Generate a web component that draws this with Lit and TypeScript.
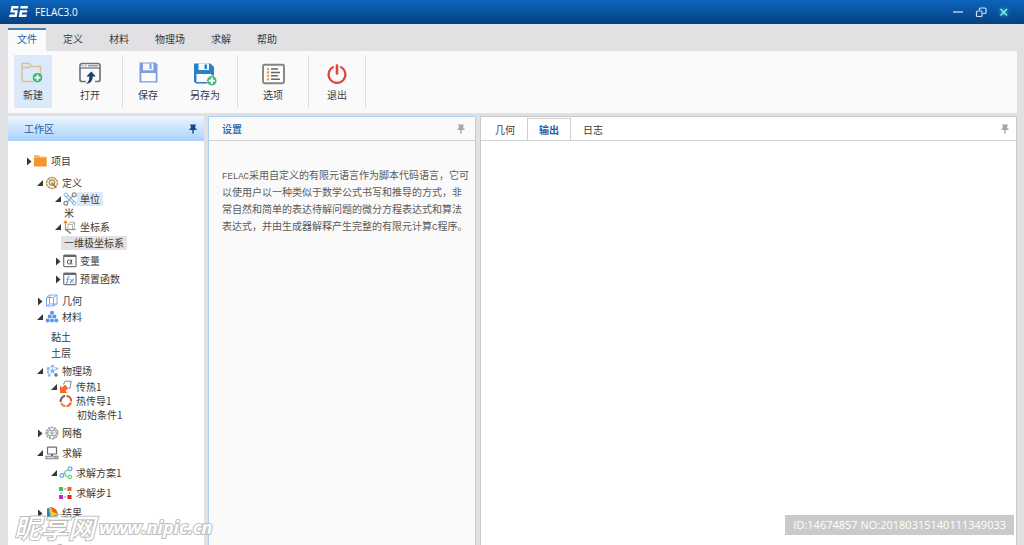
import { LitElement, html, svg, css, nothing } from "lit";
import { customElement, state } from "lit/decorators.js";
import { classMap } from "lit/directives/class-map.js";

type Row = {
  label: string;
  level: string;
  gap?: string;
  arrow?: "open" | "closed";
  icon?: string;
  mark?: "blue" | "gray";
};

const ROWS: Row[] = [
  { label: "项目", level: "l1", arrow: "closed", icon: "folder" },
  { label: "定义", level: "l2", gap: "g8", arrow: "open", icon: "define" },
  { label: "单位", level: "l4", gap: "g2", arrow: "open", icon: "unit", mark: "blue" },
  { label: "米", level: "t2" },
  { label: "坐标系", level: "l4", arrow: "open", icon: "axes" },
  { label: "一维极坐标系", level: "t2", gap: "g2", mark: "gray" },
  { label: "变量", level: "l4", gap: "g4", arrow: "closed", icon: "variable" },
  { label: "预置函数", level: "l4", gap: "g4", arrow: "closed", icon: "func" },
  { label: "几何", level: "l2", gap: "g8", arrow: "closed", icon: "cube" },
  { label: "材料", level: "l2", gap: "g2", arrow: "open", icon: "balls" },
  { label: "黏土", level: "t1", gap: "g6" },
  { label: "土层", level: "t1", gap: "g2" },
  { label: "物理场", level: "l2", gap: "g4", arrow: "open", icon: "atoms" },
  { label: "传热1", level: "l3", gap: "g2", arrow: "open", icon: "heat" },
  { label: "热传导1", level: "l3", icon: "ring" },
  { label: "初始条件1", level: "t3" },
  { label: "网格", level: "l2", gap: "g4", arrow: "closed", icon: "mesh" },
  { label: "求解", level: "l2", gap: "g6", arrow: "open", icon: "computer" },
  { label: "求解方案1", level: "l3", gap: "g6", arrow: "open", icon: "plan" },
  { label: "求解步1", level: "l3", gap: "g6", icon: "steps" },
  { label: "结果", level: "l2", gap: "g6", arrow: "closed", icon: "result" },
];

const TREE_ICONS: Record<string, unknown> = {
  folder: svg`<path d="M0 1.500h5l1 1.200h6.700v9.800H0z" fill="#f7942a"/><path d="M0 1.500h5l1 1.600h6.700v1H0z" fill="#f9b673"/>`,
  define: svg`<circle cx="7" cy="7" r="5.400" fill="none" stroke="#b8935a" stroke-width="1.500" stroke-dasharray="2.800 0.500"/><circle cx="7" cy="6.600" r="2.700" fill="none" stroke="#b8935a" stroke-width="1.500"/><path d="M6.500 6.500l4.600 5" stroke="#a07a42" stroke-width="1.800"/>`,
  unit: svg`<g fill="none"><path d="M3.500 3.500l7.500 7.500" stroke="#7fb2f2" stroke-width="3.400"/><path d="M3.500 3.500l7.500 7.500" stroke="#fff" stroke-width="1.400"/><circle cx="2.800" cy="2.800" r="1.800" stroke="#7fb2f2"/><circle cx="11.200" cy="11.200" r="1.800" stroke="#7fb2f2"/><path d="M10 4L4 10" stroke="#7fb2f2" stroke-width="1.400"/><circle cx="11.200" cy="2.800" r="1.900" stroke="#888" stroke-width="1.300"/><circle cx="2.800" cy="11.200" r="1.900" stroke="#888" stroke-width="1.300"/></g>`,
  axes: svg`<g fill="none"><path d="M2.500 10V1M0.800 3l1.700-2L4.200 3" stroke="#f08a24" stroke-width="1.300"/><path d="M2 9.500h10.500" stroke="#888" stroke-width="1.300"/><path d="M2.500 9.500l5.500 4" stroke="#777" stroke-width="1.300"/><path d="M5 4.500h4.500v5H5zM5 4.500l2-2.300h4.500v5l-2 2.300M9.500 4.500l2-2.300" stroke="#a5a5a5" stroke-width="0.800"/></g>`,
  variable: svg`<rect x="0.700" y="1" width="12.300" height="11.700" rx="1" fill="#fff" stroke="#777" stroke-width="1.200"/><path d="M1 2h12" stroke="#666" stroke-width="2"/><ellipse cx="6.200" cy="8" rx="1.900" ry="2.100" fill="none" stroke="#555"/><path d="M8.800 5.500l-.7 4q.1 1 1.300.5" fill="none" stroke="#555"/>`,
  func: svg`<rect x="0.700" y="1" width="12.300" height="11.700" rx="1" fill="#fff" stroke="#777" stroke-width="1.200"/><path d="M1 2h12" stroke="#666" stroke-width="2"/><path d="M6.800 4.600q-1.600-.5-1.900 1.400l-.8 4.500q-.3 1-1.200.8M3.400 7.200h2.800M7.300 7l3.200 4M10.800 7l-4 4" fill="none" stroke="#5b9df0" stroke-width="1.100"/>`,
  cube: svg`<g fill="none" stroke="#74acf2" stroke-width="1"><path d="M1.500 3.500h7v8.500h-7zM4.500 1h7.500v9H4.500zM1.500 3.500l3-2.500M8.500 3.500L12 1M8.500 12L12 10M1.500 12l3-2"/></g>`,
  balls: svg`<g fill="#5897ea"><circle cx="7" cy="2.800" r="2"/><circle cx="4.700" cy="6.600" r="2"/><circle cx="9.300" cy="6.600" r="2"/><circle cx="2.700" cy="10.600" r="2"/><circle cx="7" cy="10.600" r="2"/><circle cx="11.300" cy="10.600" r="2"/></g>`,
  atoms: svg`<g stroke="#8fbdf2" stroke-width="0.900" fill="#6fa9f2"><path d="M7.500 7V2M7.500 7l4.500-2M7.500 7l3 4M7.500 7l-3 4.500M7.500 7L3 4.500M3 4.500l4.500-2.500 4.500 2.600M3 4.500v4l1 3" fill="none"/><circle cx="7.500" cy="7" r="1.500"/><circle cx="7.500" cy="2" r=".9"/><circle cx="12" cy="4.600" r=".9"/><circle cx="3" cy="4.500" r="1"/><circle cx="4.200" cy="11.500" r=".9"/><circle cx="3" cy="8" r=".8"/></g><path d="M11 9v4M9 11h4" stroke="#555" stroke-width="1.200"/>`,
  heat: svg`<path d="M4.500 4.500l1.500-3.300h6.200l-1 7H9" fill="none" stroke="#888" stroke-width="1"/><path d="M1 13V5.500l2 2L6 4.800l3.200 3.300L6.600 11l2 2z" fill="#f5682c"/>`,
  ring: svg`<g fill="none" stroke-width="2.100"><path d="M1.800 8A5.200 5.200 0 0 1 6 1.900" stroke="#666"/><path d="M7.500 1.900A5.200 5.200 0 0 1 12.200 7.500" stroke="#ea5a2c"/><path d="M12 8.500A5.200 5.200 0 0 1 7.500 12.200" stroke="#f26a2e"/><path d="M6.500 12.200A5.200 5.200 0 0 1 2.100 9" stroke="#f58a45"/></g>`,
  mesh: svg`<circle cx="7" cy="7" r="5.800" fill="none" stroke="#a0a0a0" stroke-width="1.400" stroke-dasharray="2.400 .8"/><path d="M2 4.500h10M1 7h12M2 9.500h10M4.500 2l5 10M9.500 2l-5 10M1.500 6l4 6M12.500 6l-4 6M1.500 8l4-6M12.500 8l-4-6" stroke="#a0a0a0" stroke-width=".8"/>`,
  computer: svg`<rect x="2.500" y="1.200" width="9" height="6.800" rx=".6" fill="#fff" stroke="#6e6e6e" stroke-width="1.200"/><path d="M7 8v2" stroke="#666" stroke-width="2"/><rect x="1" y="10.200" width="12" height="2.600" fill="#ddd" stroke="#777" stroke-width=".9"/><path d="M9.500 11.500h2" stroke="#3cbf6b"/>`,
  plan: svg`<g fill="none" stroke-width="1.200"><circle cx="2.800" cy="9.500" r="1.900" stroke="#6aa7f2"/><circle cx="11" cy="2.800" r="1.900" stroke="#6aa7f2"/><circle cx="11" cy="11" r="1.700" stroke="#62d486"/><path d="M4.500 8.500L6.500 5l3-1M6 7q.5 4.200 3.300 4" stroke="#62d486"/></g>`,
  steps: svg`<rect x="0" y="1" width="4" height="4" fill="#3cc55c"/><rect x="8.500" y="1" width="4" height="4" fill="#f0622a"/><rect x="0" y="9" width="4" height="4" fill="#b32fc4"/><rect x="8.500" y="9" width="4" height="4" fill="#f02020"/><path d="M5 3h2.500M5 11h2.500M10.500 6v2M2 6v2" stroke="#999"/>`,
  result: svg`<path d="M2 2.500L6.500 1q5 2 6.500 8L5 13l-3-1.500z" fill="#2f7fe0"/><path d="M3.500 2.500L7 1.200q4.500 2 6 7.500L5.500 12z" fill="#4fc46a"/><path d="M4.500 2.200L7.500 1.500q4 2 5.500 6.500L6 10.500z" fill="#f5d328"/><path d="M6 1l5 2.500L13 8 7.500 6z" fill="#ee5a24"/>`,
};

const TOOL_ICONS: Record<string, unknown> = {
  new: svg`<path d="M13 19.500H3a2 2 0 0 1-2-2V1.500h7.500l1.500 3h9.500V13M1.500 5.500H9" fill="none" stroke="#dcbf8c" stroke-width="1.400"/><circle cx="16.500" cy="15.700" r="4.800" fill="#3fb573"/><path d="M16.500 12.700v6M13.500 15.700h6" stroke="#fff" stroke-width="1.800"/>`,
  open: svg`<path d="M8 19.500H4a2 2 0 0 1-2-2V3.500a2 2 0 0 1 2-2h16a2 2 0 0 1 2 2v14a2 2 0 0 1-2 2h-3" fill="none" stroke="#6d7680" stroke-width="1.700"/><path d="M2 6h20" stroke="#6d7680" stroke-width="1.300"/><path d="M4 3.800h1.500M7 3.800h1.500M10 3.800h10" stroke="#6d7680"/><path d="M13.300 9.500l4.500 5h-3q.2 6.500-7 7.500 3.800-2.500 3.500-7.500H8.300z" fill="#17426f"/>`,
  save: svg`<path d="M3.500 .5h16l2 2V20.500h-18z" fill="#7d9ddd"/><path d="M7 1.500h10.500v6.800H7z" fill="#f4f7fd"/><path d="M13.500 1.500h2v5.500h-2z" fill="#7d9ddd"/><path d="M5.300 11h14.400v8.200H5.300z" fill="#fafbfe"/>`,
  saveas: svg`<path d="M1 1.500h16.500l3.500 3.500v16.500H3l-2-2z" fill="#2c7fc4"/><path d="M5.500 1.500H16V8H5.500z" fill="#f4f9fd"/><path d="M11.500 2.500H14v4.500h-2.500z" fill="#2c7fc4"/><path d="M3.500 12h15v8h-15z" fill="#fafbfe"/><circle cx="18.800" cy="18.700" r="5" fill="#3fb573" stroke="#fafafa" stroke-width=".6"/><path d="M18.800 15.500v6.400M15.600 18.700H22" stroke="#fff" stroke-width="2"/>`,
  options: svg`<rect x="2" y="2.700" width="21" height="18.600" rx="1.500" fill="#fcfcfc" stroke="#858585" stroke-width="1.900"/><g fill="#e8a45c"><circle cx="7" cy="7" r="1.300"/><circle cx="7" cy="10.400" r="1.300"/><circle cx="7" cy="13.800" r="1.300"/><circle cx="7" cy="17.200" r="1.300"/></g><path d="M10 7h7M10 10.400h9M10 13.800h7M10 17.200h9" stroke="#666" stroke-width="1.500"/>`,
  exit: svg`<path d="M8 5.100a8.400 8.400 0 1 0 8 0" fill="none" stroke="#dc473f" stroke-width="2.200" stroke-linecap="round"/><path d="M12 3.500v8" stroke="#dc473f" stroke-width="2.600" stroke-linecap="round"/>`,
};

const TOOL_GROUPS = [
  { cls: "", tools: [["new", "新建"], ["open", "打开"]] },
  { cls: "", tools: [["save", "保存"], ["saveas", "另存为"]] },
  { cls: "wide", tools: [["options", "选项"]] },
  { cls: "mid", tools: [["exit", "退出"]] },
];

const MENU = ["文件", "定义", "材料", "物理场", "求解", "帮助"];
const VIEWS = ["几何", "输出", "日志"];

@customElement("app-root")
export class AppRoot extends LitElement {
  @state() private menu = "文件";
  @state() private view = "输出";

  static styles = css`
    :host {
      display: flex;
      flex-direction: column;
      height: 100vh;
      min-height: 540px;
      overflow: hidden;
      position: relative;
      background: #e1e1e3;
      color: #3a3a3a;
      font: 10px/14px "Noto Sans CJK SC", sans-serif;
    }
    * { box-sizing: border-box; }
    button {
      border: 0;
      margin: 0;
      padding: 0;
      background: none;
      color: inherit;
      font: inherit;
      cursor: pointer;
    }
    svg { display: block; flex: none; }
    .titlebar {
      flex: none;
      height: 24px;
      display: flex;
      align-items: center;
      padding: 0 14px 0 9px;
      gap: 6px;
      background: linear-gradient(#0c64be, #06407f);
      color: #fff;
    }
    .titlebar h1 {
      flex: 1;
      margin: 0;
      font: 10px/16px "Open Sans", "Noto Sans", sans-serif;
    }
    .window { display: flex; gap: 11px; }
    .glow { filter: drop-shadow(0 0 2px #3fd6e0); }
    .menu {
      flex: none;
      display: flex;
      gap: 8px;
      padding: 4px 8px 0;
    }
    .menu button {
      height: 23px;
      padding: 0 9px 3px;
      border-top: 2px solid transparent;
    }
    .menu .active {
      background: #fafafa;
      border-top-color: #4a7cae;
      color: #1f5da6;
    }
    .ribbon {
      flex: none;
      display: flex;
      margin: 0 7px 0 8px;
      padding: 4px 0 5px;
      background: #fafafa;
    }
    .group {
      display: flex;
      gap: 19px;
      padding: 0 13px 0 6px;
      border-right: 1px solid #dedede;
    }
    .group.wide { padding: 0 16px; }
    .group.mid { padding: 0 9px; }
    .tool {
      width: 38px;
      height: 53px;
      display: flex;
      flex-direction: column;
      align-items: center;
      gap: 2px;
      padding-top: 7px;
      white-space: nowrap;
    }
    .tool.selected { background: #dce9fa; }
    .work {
      flex: 1;
      min-height: 0;
      display: grid;
      grid-template-columns: 196px 268px 1fr;
      gap: 4px;
      padding: 3px 7px 0 8px;
    }
    .panel {
      display: flex;
      flex-direction: column;
      min-width: 0;
      min-height: 0;
      overflow: hidden;
    }
    .head {
      flex: none;
      height: 25px;
      display: flex;
      align-items: center;
      justify-content: space-between;
      color: #245fa6;
    }
    .head h2 { margin: 0; font: inherit; }
    .tree-panel { background: #fff; }
    .tree-panel .head {
      padding: 0 7px 0 16px;
      background: linear-gradient(#ecf6ff, #a9d2fc);
    }
    .settings {
      background: #fafafa;
      border: 1px solid #a9d0f5;
      border-bottom: 0;
    }
    .settings .head {
      padding: 0 10px 0 13px;
      height: 24px;
      border-bottom: 1px solid #d0d0d0;
    }
    .settings h2 { font-weight: 500; }
    .settings p {
      margin: 25px 4px 0 13px;
      line-height: 17px;
      color: #5a5a5a;
    }
    .code { font: 9px/1 "Liberation Mono", monospace; }
    .output {
      background: #fff;
      border: 1px solid #c9c9cb;
      border-bottom: 0;
    }
    .output .head {
      height: 24px;
      padding: 0 7px 0 2px;
      border-bottom: 1px solid #cfcfcf;
      color: #3a3a3a;
    }
    .views {
      display: flex;
      align-self: flex-end;
    }
    .views button {
      height: 22px;
      padding: 0 11px;
      border: 1px solid transparent;
      border-bottom: 0;
    }
    .views .active {
      margin-bottom: -1px;
      height: 22px;
      background: #fff;
      border-color: #cfcfcf;
      color: #1f5da6;
      font-weight: 700;
    }
    .tree { margin: 0; padding: 13px 0 0; list-style: none; }
    .row {
      height: 14px;
      display: flex;
      align-items: center;
      white-space: nowrap;
    }
    .g2 { margin-top: 2px; }
    .g4 { margin-top: 4px; }
    .g6 { margin-top: 6px; }
    .g8 { margin-top: 8px; }
    .l1 { padding-left: 17px; }
    .l2 { padding-left: 28px; }
    .l3 { padding-left: 42px; }
    .l4 { padding-left: 46px; }
    .t1 { padding-left: 40px; }
    .t2 { padding-left: 53px; }
    .t3 { padding-left: 66px; }
    .slot { width: 9px; height: 14px; flex: none; }
    .label { padding: 0 3px; }
    .blue { background: #dce9fa; }
    .gray { background: #e2e2e2; }
    .stamp {
      position: absolute;
      right: 10px;
      bottom: 10px;
      padding: 2px 8px;
      background: #cacaca;
      color: #fff;
      font: 11px/16px "Open Sans", "Noto Sans", sans-serif;
    }
    .mark {
      position: absolute;
      left: 14px;
      bottom: -26px;
      display: grid;
      grid-template-columns: auto auto;
      align-items: center;
      gap: 2px 4px;
      color: #fff;
      -webkit-text-stroke: 2px #bcbcbc;
      paint-order: stroke fill;
      font: italic 500 27px/28px "Noto Sans CJK SC", sans-serif;
      pointer-events: none;
    }
    .site { font: italic 700 18px/28px "Open Sans", sans-serif; }
  `;

  private pin(color: string) {
    return html`<svg width="8" height="10" viewBox="0 0 8 10" aria-hidden="true">
      <path d="M1 0.500h6v1h-.8v3h1.300v1.500H4.700v3.500H3.300V6H.5V4.500h1.300v-3H1z" fill=${color} />
    </svg>`;
  }

  private row(r: Row) {
    const cls = `row ${r.level} ${r.gap ?? ""}`;
    return html`<li class=${cls} role="treeitem">
      ${r.level.startsWith("l")
        ? html`<span class="slot">${r.arrow
            ? html`<svg width="8" height="14" viewBox="0 0 8 14" aria-hidden="true">
                <path d=${r.arrow === "open" ? "M7 4v6H1z" : "M2 3.500L6.500 7.500 2 11.500z"} fill="#383838" />
              </svg>`
            : nothing}</span>
            <svg width="14" height="14" viewBox="0 0 14 14" aria-hidden="true">${TREE_ICONS[r.icon!]}</svg>`
        : nothing}
      <span class=${classMap({ label: true, blue: r.mark === "blue", gray: r.mark === "gray" })}>${r.label}</span>
    </li>`;
  }

  render() {
    return html`
      <header class="titlebar">
        <svg width="20" height="12" viewBox="0 0 20 12" aria-hidden="true">
          <path d="M2.500 0h7.200l-.6 2.500H4.200l-.3 1.700h5L7.700 11H0l.6-2.500h5l.4-2H1.300z" fill="#fff" />
          <path d="M11.700 0H19l-.5 2.500h-7.300zM11 4.200h7.400l-.5 2.300h-4.700l-.4 2h5L17.300 11H9.700z" fill="#fff" />
        </svg>
        <h1>FELAC3.0</h1>
        <div class="window">
          <button aria-label="最小化"><svg width="12" height="12" viewBox="0 0 12 12"><path d="M1 6h10" stroke="#dce8f5" stroke-width="1.200" /></svg></button>
          <button aria-label="还原"><svg width="12" height="12" viewBox="0 0 12 12" fill="none" stroke="#cfe0f2" stroke-width="1.200"><rect x="1.500" y="5" width="5.500" height="5.500" rx="1" /><path d="M4.500 4V3q0-1 1-1h4.500q1 0 1 1v3.500q0 1-1 1H8" /></svg></button>
          <button aria-label="关闭"><svg class="glow" width="12" height="12" viewBox="0 0 12 12"><path d="M2.500 3l6.500 6.500M9 3L2.500 9.500" stroke="#7ff0e4" stroke-width="1.500" /></svg></button>
        </div>
      </header>
      <nav class="menu">
        ${MENU.map((m) => html`<button class=${classMap({ active: m === this.menu })} @click=${() => (this.menu = m)}>${m}</button>`)}
      </nav>
      <div class="ribbon">
        ${TOOL_GROUPS.map((g) => html`<div class="group ${g.cls}">
          ${g.tools.map(([id, name]) => html`<button class=${classMap({ tool: true, selected: id === "new" })}>
            <svg width="24" height="24" viewBox="0 0 24 24" aria-hidden="true">${TOOL_ICONS[id]}</svg>
            <span>${name}</span>
          </button>`)}
        </div>`)}
      </div>
      <main class="work">
        <section class="panel tree-panel">
          <div class="head"><h2>工作区</h2><button aria-label="固定工作区">${this.pin("#15468c")}</button></div>
          <ul class="tree" role="tree">${ROWS.map((r) => this.row(r))}</ul>
        </section>
        <section class="panel settings">
          <div class="head"><h2>设置</h2><button aria-label="固定设置">${this.pin("#a5a5a5")}</button></div>
          <p><span class="code">FELAC</span>采用自定义的有限元语言作为脚本代码语言，它可以使用户以一种类似于数学公式书写和推导的方式，非常自然和简单的表达待解问题的微分方程表达式和算法表达式，并由生成器解释产生完整的有限元计算<span class="code">C</span>程序。</p>
        </section>
        <section class="panel output">
          <div class="head">
            <div class="views">
              ${VIEWS.map((v) => html`<button class=${classMap({ active: v === this.view })} @click=${() => (this.view = v)}>${v}</button>`)}
            </div>
            <button aria-label="固定输出">${this.pin("#a5a5a5")}</button>
          </div>
        </section>
      </main>
      <div class="mark"><span>昵享网</span><span class="site">www.nipic.cn</span><span>昵享网</span></div>
      <div class="stamp">ID:14674857 NO:20180315140111349033</div>
    `;
  }
}
